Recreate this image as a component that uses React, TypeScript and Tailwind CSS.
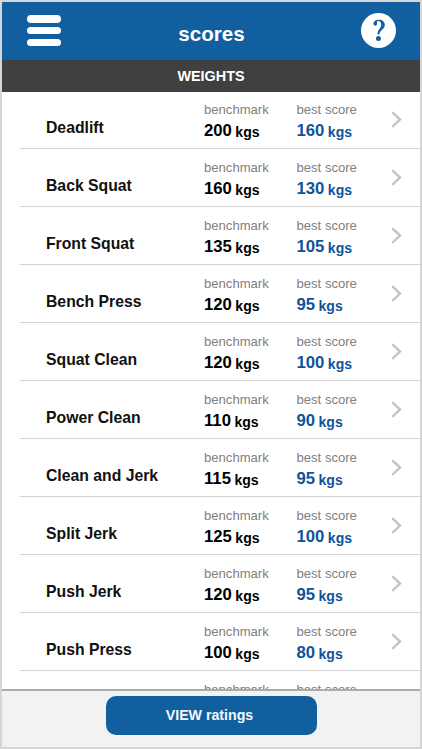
type Score = { name: string; benchmark: number; best: number };

const scores: Score[] = [
  { name: 'Deadlift', benchmark: 200, best: 160 },
  { name: 'Back Squat', benchmark: 160, best: 130 },
  { name: 'Front Squat', benchmark: 135, best: 105 },
  { name: 'Bench Press', benchmark: 120, best: 95 },
  { name: 'Squat Clean', benchmark: 120, best: 100 },
  { name: 'Power Clean', benchmark: 110, best: 90 },
  { name: 'Clean and Jerk', benchmark: 115, best: 95 },
  { name: 'Split Jerk', benchmark: 125, best: 100 },
  { name: 'Push Jerk', benchmark: 120, best: 95 },
  { name: 'Push Press', benchmark: 100, best: 80 },
];

function Metric({ label, value, className }: { label: string; value?: number; className: string }) {
  return (
    <div className={className}>
      <div className="h-4 text-[13.1px] leading-4 text-[#808080]">{label}</div>
      {value !== undefined && (
        <div className="mt-1 flex h-[18px] items-baseline font-bold">
          <span className="text-[16.7px] leading-[18px]">{value}</span>
          <span className="relative top-px ml-[3.5px] text-[14px] leading-[18px]">kgs</span>
        </div>
      )}
    </div>
  );
}

function Row({ name, benchmark, best }: Score) {
  return (
    <li className="flex h-[58px] items-end border-b border-[#d2d2d2] pb-[8px] first:h-[57px]">
      <div className="w-[184px] pb-[3px] pl-[26px] text-[15.75px] font-bold leading-[18px] text-[#111]">
        {name}
      </div>
      <Metric label="benchmark" value={benchmark} className="w-[92.5px] text-black" />
      <Metric label="best score" value={best} className="w-[93.5px] text-[#0f5398]" />
      <svg className="mb-[11px]" width="13" height="18" viewBox="0 0 13 18" fill="none">
        <path d="M2.2 1.2 L10 8.6 L2.2 16" stroke="#c3c3c8" strokeWidth="2.4" />
      </svg>
    </li>
  );
}

export default function App() {
  return (
    <div className="h-[750px] w-[422px] bg-white pb-px font-['Liberation_Sans',Arial,sans-serif]">
      <div className="flex h-[749px] flex-col overflow-hidden border-2 border-[#d6d6d6] bg-white">
        <header className="flex h-[58px] shrink-0 justify-between bg-[#115f9e] pl-[25px] pr-[24px] text-white">
          <button className="mt-[13px] flex h-[31px] w-[34px] flex-col justify-between" aria-label="Menu">
            <span className="h-[7.5px] w-full rounded-full bg-white" />
            <span className="h-[7.5px] w-full rounded-full bg-white" />
            <span className="h-[7.5px] w-full rounded-full bg-white" />
          </button>
          <h1 className="ml-px mt-5 text-[20.6px] font-bold leading-6">scores</h1>
          <button
            className="mt-[11px] flex size-[35px] items-center justify-center rounded-full bg-white"
            aria-label="Help"
          >
            <svg width="35" height="35" viewBox="0 0 35 35" fill="#115f9e">
              <path d="M12.6 9.6 C13.2 7.7 15.2 6.7 17.8 6.7 C21.5 6.7 23.8 8.7 23.8 12 C23.8 16.4 18.4 17 18.4 21.6 L16.6 21.6 C16.2 16.6 20.2 15.7 20.2 12 C20.2 9.4 19.3 8.1 17.5 8.1 C16.2 8.1 15.8 8.7 16 10.2 C16.2 11.7 15.4 12.7 14.2 12.7 C12.8 12.7 12.2 11.2 12.6 9.6 Z" />
              <circle cx="17.4" cy="25.4" r="2.5" />
            </svg>
          </button>
        </header>
        <h2 className="h-8 shrink-0 bg-[#404040] text-center text-[14.4px] font-bold leading-8 text-white">
          WEIGHTS
        </h2>
        <main className="min-h-0 flex-1 overflow-hidden pl-[18px]">
          <ul>
            {scores.map((s) => (
              <Row key={s.name} {...s} />
            ))}
          </ul>
          <div className="flex pl-[184px] pt-[11px]">
            <Metric label="benchmark" className="w-[92.5px]" />
            <Metric label="best score" className="w-[93.5px]" />
          </div>
        </main>
        <footer className="flex h-[58px] shrink-0 justify-center border-t-2 border-[#a9aca9] bg-[#f2f2f2] pt-[5px]">
          <button className="h-[39px] w-[211px] rounded-[10px] bg-[#115f9e] pr-[3px] text-[14.2px] font-bold leading-[39px] text-[#f2f8ff]">
            VIEW ratings
          </button>
        </footer>
      </div>
    </div>
  );
}
